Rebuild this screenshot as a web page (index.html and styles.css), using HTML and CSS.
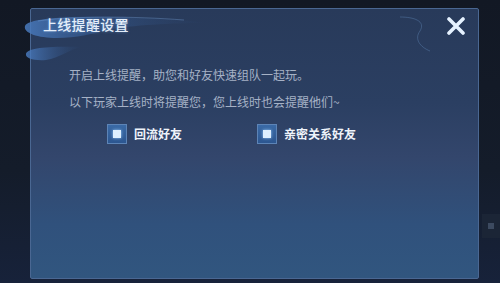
FILE: index.html
```html
<!DOCTYPE html>
<html lang="zh-CN">
  <head>
    <meta charset="UTF-8" />
    <meta name="viewport" content="width=device-width, initial-scale=1.0" />
    <title>上线提醒设置</title>
    <link rel="stylesheet" href="styles.css">
  </head>
  <body>
    <div class="side-strip">
      <span class="side-dot"></span>
    </div>

    <div class="dialog">
      <!-- 左上角的云纹装饰 -->
      <svg class="swirl" width="200" height="52" viewBox="0 0 200 52" aria-hidden="true">
        <defs>
          <linearGradient id="sw1" x1="0" y1="0" x2="1" y2="0">
            <stop offset="0" stop-color="#4a7cc0" stop-opacity="0.85" />
            <stop offset="0.35" stop-color="#3a64a0" stop-opacity="0.5" />
            <stop offset="1" stop-color="#2f4f80" stop-opacity="0" />
          </linearGradient>
          <linearGradient id="sw2" x1="0" y1="0" x2="1" y2="0">
            <stop offset="0" stop-color="#4a7cc0" stop-opacity="0.85" />
            <stop offset="1" stop-color="#2f4f80" stop-opacity="0" />
          </linearGradient>
        </defs>
        <path d="M13 16 C 16 9, 50 6, 100 7 C 145 8, 175 10, 196 13 C 160 13, 120 15, 95 20 C 80 24, 65 28, 45 28 C 26 28, 11 23, 13 16 Z" fill="url(#sw1)" />
        <path d="M26 11 C 60 6, 120 6, 172 10" fill="none" stroke="#7aa6dc" stroke-opacity="0.35" stroke-width="1" />
        <path d="M14 44 C 15 38, 35 36, 70 37 C 55 40, 48 48, 34 50 C 22 51, 13 48, 14 44 Z" fill="url(#sw2)" />
      </svg>
      <svg class="swirl-right" width="40" height="40" viewBox="0 0 40 40" aria-hidden="true">
        <path d="M0 4 C 14 4, 26 8, 20 18 C 14 26, 20 34, 30 38" fill="none" stroke="#5a80b0" stroke-opacity="0.45" stroke-width="1" />
      </svg>

      <div class="dialog-head">
        <h1 class="dialog-title">上线提醒设置</h1>
        <button class="close-button" aria-label="关闭">
          <svg width="20" height="18" viewBox="0 0 20 18">
            <path d="M3 2 L17 16 M17 2 L3 16" stroke="#e6f2ff" stroke-width="3.6" stroke-linecap="round" />
          </svg>
        </button>
      </div>

      <div class="dialog-body">
        <p class="info-line first">开启上线提醒，助您和好友快速组队一起玩。</p>
        <p class="info-line">以下玩家上线时将提醒您，您上线时也会提醒他们~</p>

        <div class="option-row">
          <label class="option">
            <span class="check-box"><span class="check-mark"></span></span>
            <span class="option-label">回流好友</span>
          </label>
          <label class="option">
            <span class="check-box"><span class="check-mark"></span></span>
            <span class="option-label">亲密关系好友</span>
          </label>
        </div>
      </div>
    </div>
  </body>
</html>
```

FILE: styles.css
```css
* {
  margin: 0;
  padding: 0;
  box-sizing: border-box;
  font-family: "Noto Sans CJK SC", "Noto Sans", sans-serif;
}

body {
  width: 500px;
  height: 283px;
  overflow: hidden;
  background: linear-gradient(180deg, #121824 0%, #141c2a 60%, #17223a 100%);
  padding: 8px 21px 0 30px;
  position: relative;
}

/* 右侧背景条 */
.side-strip {
  position: absolute;
  right: 0;
  top: 214px;
  width: 18px;
  height: 24px;
  background-color: #1b2536;
  display: flex;
  align-items: center;
  justify-content: center;
}

.side-dot {
  width: 6px;
  height: 6px;
  background-color: #3c4a60;
}

.dialog {
  position: relative;
  width: 449px;
  height: 271px;
  border: 1px solid #4a6792;
  border-radius: 2px;
  background: linear-gradient(180deg, #283a5a 0%, #2b3f62 35%, #33466c 55%, #30517c 80%, #31567f 100%);
}

.swirl {
  position: absolute;
  left: -19px;
  top: 1px;
  pointer-events: none;
}

.swirl-right {
  position: absolute;
  right: 38px;
  top: 4px;
  pointer-events: none;
}

.dialog-head {
  position: relative;
  height: 30px;
  display: flex;
  align-items: center;
  justify-content: space-between;
  padding: 0 12px 0 12px;
}

.dialog-title {
  font-size: 14px;
  font-weight: 500;
  line-height: 30px;
  color: #e4eefa;
  letter-spacing: 0.3px;
  text-shadow: 0 0 3px rgba(120, 170, 230, 0.6);
}

.close-button {
  background: none;
  border: none;
  width: 20px;
  height: 18px;
  margin-top: 3px;
  display: flex;
  cursor: pointer;
}

.dialog-body {
  padding: 28px 0 0 38px;
}

.info-line {
  font-size: 12px;
  line-height: 16px;
  color: #a6b2c6;
  margin-top: 11px;
}

.info-line.first {
  margin-top: 0;
}

.option-row {
  display: flex;
  gap: 75px;
  margin: 14px 0 0 38px;
}

.option {
  display: flex;
  align-items: center;
  gap: 7px;
  cursor: pointer;
}

.check-box {
  width: 20px;
  height: 20px;
  border: 1px solid #5d84b6;
  background: linear-gradient(180deg, #3a6aa6 0%, #2c5690 100%);
  display: flex;
  align-items: center;
  justify-content: center;
}

.check-mark {
  width: 8px;
  height: 8px;
  background-color: #dff0ff;
  box-shadow: 0 0 3px #9fd0ff;
}

.option-label {
  font-size: 12px;
  font-weight: 700;
  line-height: 20px;
  color: #eef3fa;
}
```
